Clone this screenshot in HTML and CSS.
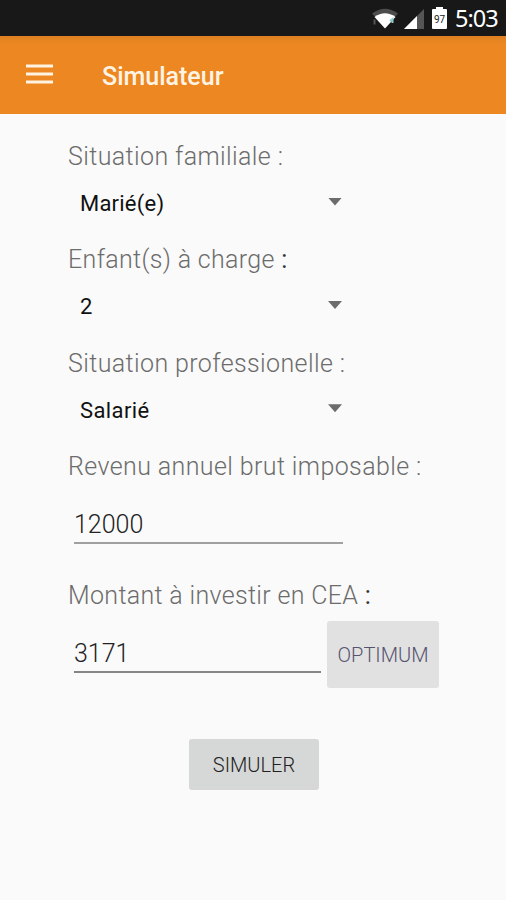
FILE: index.html
```html
<!DOCTYPE html>
<html lang="fr">
<head>
<meta charset="utf-8">
<title>Simulateur</title>
<link rel="stylesheet" href="styles.css">
</head>
<body>
<div class="status">
  <svg class="wifi" width="28" height="22" viewBox="0 0 28 22">
    <path d="M1 6.5Q14-3 27 6.5L14 21Z" fill="#4b4c4c"/>
    <path d="M3.5 10Q14 2.5 24.5 10L14 21.5Z" fill="#fff"/>
    <path d="M3.5 12.500v5" fill="none" stroke="#555" stroke-width="2"/>
    <path d="M19 14l2.500-2v4" fill="none" stroke="#8fc9cb" stroke-width="2"/>
  </svg>
  <svg class="signal" width="21" height="21" viewBox="0 0 21 21">
    <path d="M20 1v20H0Z" fill="#555"/>
    <path d="M13 8v13H0Z" fill="#fff"/>
  </svg>
  <div class="battery"><span>97</span></div>
  <span class="clock">5:03</span>
</div>
<header class="bar">
  <svg class="menu" width="27" height="20" viewBox="0 0 27 20">
    <path d="M0 2h27M0 10h27M0 18h27" stroke="#fff4e4" stroke-width="3"/>
  </svg>
  <h1 class="title">Simulateur</h1>
</header>
<main class="form">
  <div class="label">Situation familiale :</div>
  <div class="spinner"><span class="s1">Marié(e)</span><i class="arrow"></i></div>
  <div class="label tight">Enfant(s) à charge <b>:</b></div>
  <div class="spinner"><span>2</span><i class="arrow"></i></div>
  <div class="label">Situation professionelle :</div>
  <div class="spinner"><span class="s3">Salarié</span><i class="arrow"></i></div>
  <div class="label">Revenu annuel brut imposable :</div>
  <div class="row"><div class="field wide">12000</div></div>
  <div class="label tight">Montant à investir en CEA <b>:</b></div>
  <div class="row"><div class="field short">3171</div><button class="optimum">OPTIMUM</button></div>
  <button class="submit">SIMULER</button>
</main>
</body>
</html>
```

FILE: styles.css
```css
body {
  margin: 0;
  height: 900px;
  overflow: hidden;
  background: #fafafa;
  color: #171717;
  font-family: Roboto, "Noto Sans", sans-serif;
}
button { border: 0; padding: 0; font: inherit; }
.status {
  display: flex;
  align-items: center;
  box-sizing: border-box;
  height: 36px;
  padding-left: 371px;
  background: #181818;
  color: #fff;
}
.signal { margin-left: 5px; }
.battery {
  position: relative;
  display: flex;
  align-items: center;
  justify-content: center;
  width: 15px;
  height: 20px;
  margin: 2px 0 0 7px;
  border-radius: 1px;
  background: #fff;
  color: #222;
  font-size: 10px;
}
.battery::before {
  content: "";
  position: absolute;
  top: -2px;
  left: 4px;
  width: 7px;
  height: 2px;
  background: #fff;
}
.clock {
  margin: -1px 0 0 8px;
  font: 23.5px/30px "Noto Sans", sans-serif;
  letter-spacing: -1px;
}
.bar {
  display: flex;
  align-items: center;
  box-sizing: border-box;
  height: 78px;
  padding-left: 26px;
  background: linear-gradient(#dc8022, #ec8722 7px);
}
.menu { margin-top: -2px; }
.title {
  margin: 3px 0 0 49px;
  color: #fff4e4;
  font-size: 25px;
  font-weight: 500;
  line-height: 32px;
}
.form { display: flex; flex-direction: column; padding: 28px 0 0 68px; }
.label {
  height: 30px;
  color: #6c6c6c;
  font-size: 25px;
  font-weight: 300;
  line-height: 30px;
  letter-spacing: 0.39px;
  white-space: nowrap;
}
.tight { letter-spacing: 0.33px; }
.label b { color: #333; font-weight: 400; }
.spinner {
  display: flex;
  align-items: center;
  justify-content: space-between;
  width: 262px;
  height: 64px;
  margin-bottom: 9.4px;
  padding-left: 12px;
  color: #111;
  font-size: 22px;
}
.spinner span { margin-top: -1px; }
.s1 { letter-spacing: 0.22px; }
.s3 { letter-spacing: 0.4px; }
.arrow {
  width: 14px;
  height: 8px;
  margin-top: -5px;
  background: #6c6c6c;
  clip-path: polygon(0 0, 100% 0, 50% 100%);
}
.row { display: flex; height: 99px; }
.field {
  box-sizing: border-box;
  height: 37px;
  margin: 25px 0 0 6px;
  border-bottom: 2px solid #a0a0a0;
  color: #222;
  font-size: 25px;
  font-weight: 350;
  line-height: 36px;
}
.wide { width: 269px; }
.short { width: 247px; border-color: #858585; }
.optimum {
  width: 112px;
  height: 67px;
  margin: 10px 0 0 6px;
  border-radius: 3px;
  background: #e1e1e1;
  color: #56536f;
  font-size: 20px;
  font-weight: 350;
  line-height: 69px;
}
.submit {
  width: 130px;
  height: 51px;
  margin: 29px 0 0 121px;
  border-radius: 3px;
  background: #d6d7d7;
  color: #222;
  font-size: 20px;
  font-weight: 350;
}
```
